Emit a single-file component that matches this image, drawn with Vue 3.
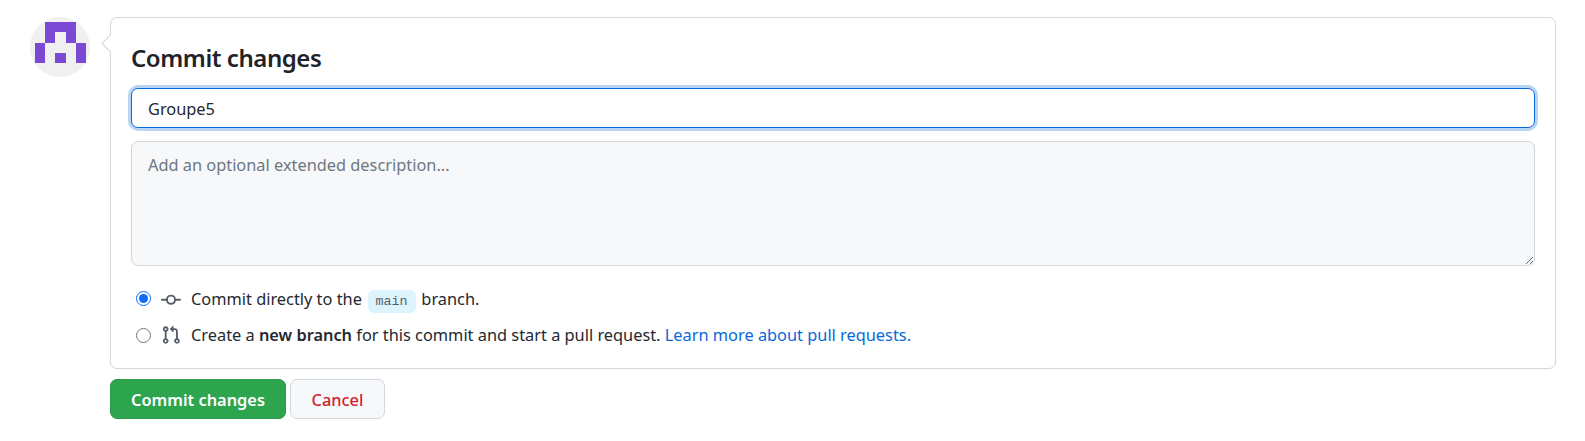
<template>
  <div class="page">
    <div class="avatar">
      <svg viewBox="0 0 5 4" width="51" height="41" shape-rendering="crispEdges">
        <path fill="#7b49d3" d="M1 0h3v2h1v2H4V2H3V1H2v1H1v2H0V2h1zM2 3h1v1H2z" />
      </svg>
    </div>
    <div class="main">
      <form class="card" @submit.prevent>
        <span class="caret"></span>
        <h2 class="title">Commit changes</h2>
        <input class="summary" type="text" value="Groupe5" />
        <textarea class="desc" placeholder="Add an optional extended description..."></textarea>
        <label class="option first">
          <input type="radio" name="target" checked />
          <svg class="icon" viewBox="0 0 16 16" width="20" height="20">
            <path fill="#57606a" d="M11.93 8.5a4.002 4.002 0 0 1-7.86 0H.75a.75.75 0 0 1 0-1.5h3.32a4.002 4.002 0 0 1 7.86 0h3.32a.75.75 0 0 1 0 1.5Zm-1.43-.75a2.5 2.5 0 1 0-5 0 2.5 2.5 0 0 0 5 0Z" />
          </svg>
          <span>Commit directly to the <code class="branch">main</code> branch.</span>
        </label>
        <label class="option">
          <input type="radio" name="target" />
          <svg class="icon" viewBox="0 0 16 16" width="20" height="20">
            <path fill="#57606a" d="M1.5 3.25a2.25 2.25 0 1 1 3 2.122v5.256a2.251 2.251 0 1 1-1.5 0V5.372A2.25 2.25 0 0 1 1.5 3.25Zm5.677-.177L9.573.677A.25.25 0 0 1 10 .854V2.5h1A2.5 2.5 0 0 1 13.5 5v5.628a2.251 2.251 0 1 1-1.5 0V5a1 1 0 0 0-1-1h-1v1.646a.25.25 0 0 1-.427.177L7.177 3.427a.25.25 0 0 1 0-.354ZM3.75 2.5a.75.75 0 1 0 0 1.5.75.75 0 0 0 0-1.5Zm0 9.5a.75.75 0 1 0 0 1.5.75.75 0 0 0 0-1.5Zm8.25.75a.75.75 0 1 0 1.5 0 .75.75 0 0 0-1.5 0Z" />
          </svg>
          <span>Create a <strong>new branch</strong> for this commit and start a pull request. <a class="link" href="#">Learn more about pull requests.</a></span>
        </label>
      </form>
      <div class="actions">
        <button class="btn primary" type="button">Commit changes</button>
        <button class="btn cancel" type="button">Cancel</button>
      </div>
    </div>
  </div>
</template>

<script setup>
</script>

<style>
html, body { background: #fff; }
</style>

<style scoped>
.page {
  display: flex;
  align-items: flex-start;
  gap: 20px;
  padding: 17px 29px 0 30px;
  font-family: "Noto Sans", "Open Sans", sans-serif;
  font-size: 16.35px;
  color: #24292f;
}
.avatar {
  width: 60px;
  height: 60px;
  flex: none;
  box-sizing: border-box;
  padding: 5px 0 0 5px;
  border-radius: 50%;
  background: #f0f0f0;
}
.avatar svg { display: block; }
.main { flex: 1; min-width: 0; }
.card {
  position: relative;
  display: flex;
  flex-direction: column;
  height: 352px;
  box-sizing: border-box;
  padding: 0 20px;
  border: 1px solid #d0d7de;
  border-radius: 7px;
  background: #fff;
}
.caret {
  position: absolute;
  left: -7px;
  top: 19px;
  width: 12px;
  height: 12px;
  background: #fff;
  border-left: 1px solid #d0d7de;
  border-bottom: 1px solid #d0d7de;
  transform: rotate(45deg);
}
.title {
  margin: 24px 0 0;
  font-size: 24px;
  line-height: 32px;
  font-weight: 600;
  color: #1f2328;
  letter-spacing: -0.45px;
}
.summary, .desc {
  display: block;
  box-sizing: border-box;
  width: 100%;
  font: inherit;
  color: #24292f;
  padding: 0 15px 0 16px;
  border-radius: 7px;
  outline: none;
}
.summary {
  height: 40px;
  margin-top: 14px;
  padding-top: 2px;
  border: 1px solid #0969da;
  background: #fff;
  box-shadow: 0 0 0 3px #b9d5f5;
}
.desc {
  height: 125px;
  margin-top: 13px;
  padding-top: 11px;
  border: 1px solid #d0d7de;
  background: #f6f8fa;
  line-height: 24px;
}
.desc::placeholder { color: #6e7781; opacity: 1; }
.option {
  display: flex;
  align-items: center;
  height: 24px;
  margin-top: 11px;
  line-height: 24px;
}
.option.first { margin-top: 22px; }
.option input {
  flex: none;
  width: 15px;
  height: 15px;
  margin: 0 10px 0 5px;
  accent-color: #0b6cff;
}
.option.first input { margin-bottom: 4px; }
.icon { flex: none; margin-right: 10px; }
.branch {
  display: inline-block;
  font-family: "Liberation Mono", monospace;
  font-size: 13.33px;
  line-height: 23px;
  padding: 0 8px;
  border-radius: 6px;
  background: #ddf4ff;
  color: #57606a;
  margin: 0 1.5px;
}
strong { font-weight: 600; }
.link { color: #0969da; text-decoration: none; }
.actions {
  display: flex;
  gap: 4px;
  margin-top: 10px;
}
.btn {
  height: 40px;
  box-sizing: border-box;
  border-radius: 7px;
  font: inherit;
  font-weight: 500;
  padding: 1px 0 0;
}
.primary {
  width: 176px;
  background: #2da44e;
  border: 1px solid #2a9a4a;
  color: #fff;
  font-weight: 600;
}
.cancel {
  width: 95px;
  background: #f6f8fa;
  border: 1px solid #d0d7de;
  color: #cf222e;
}
</style>
